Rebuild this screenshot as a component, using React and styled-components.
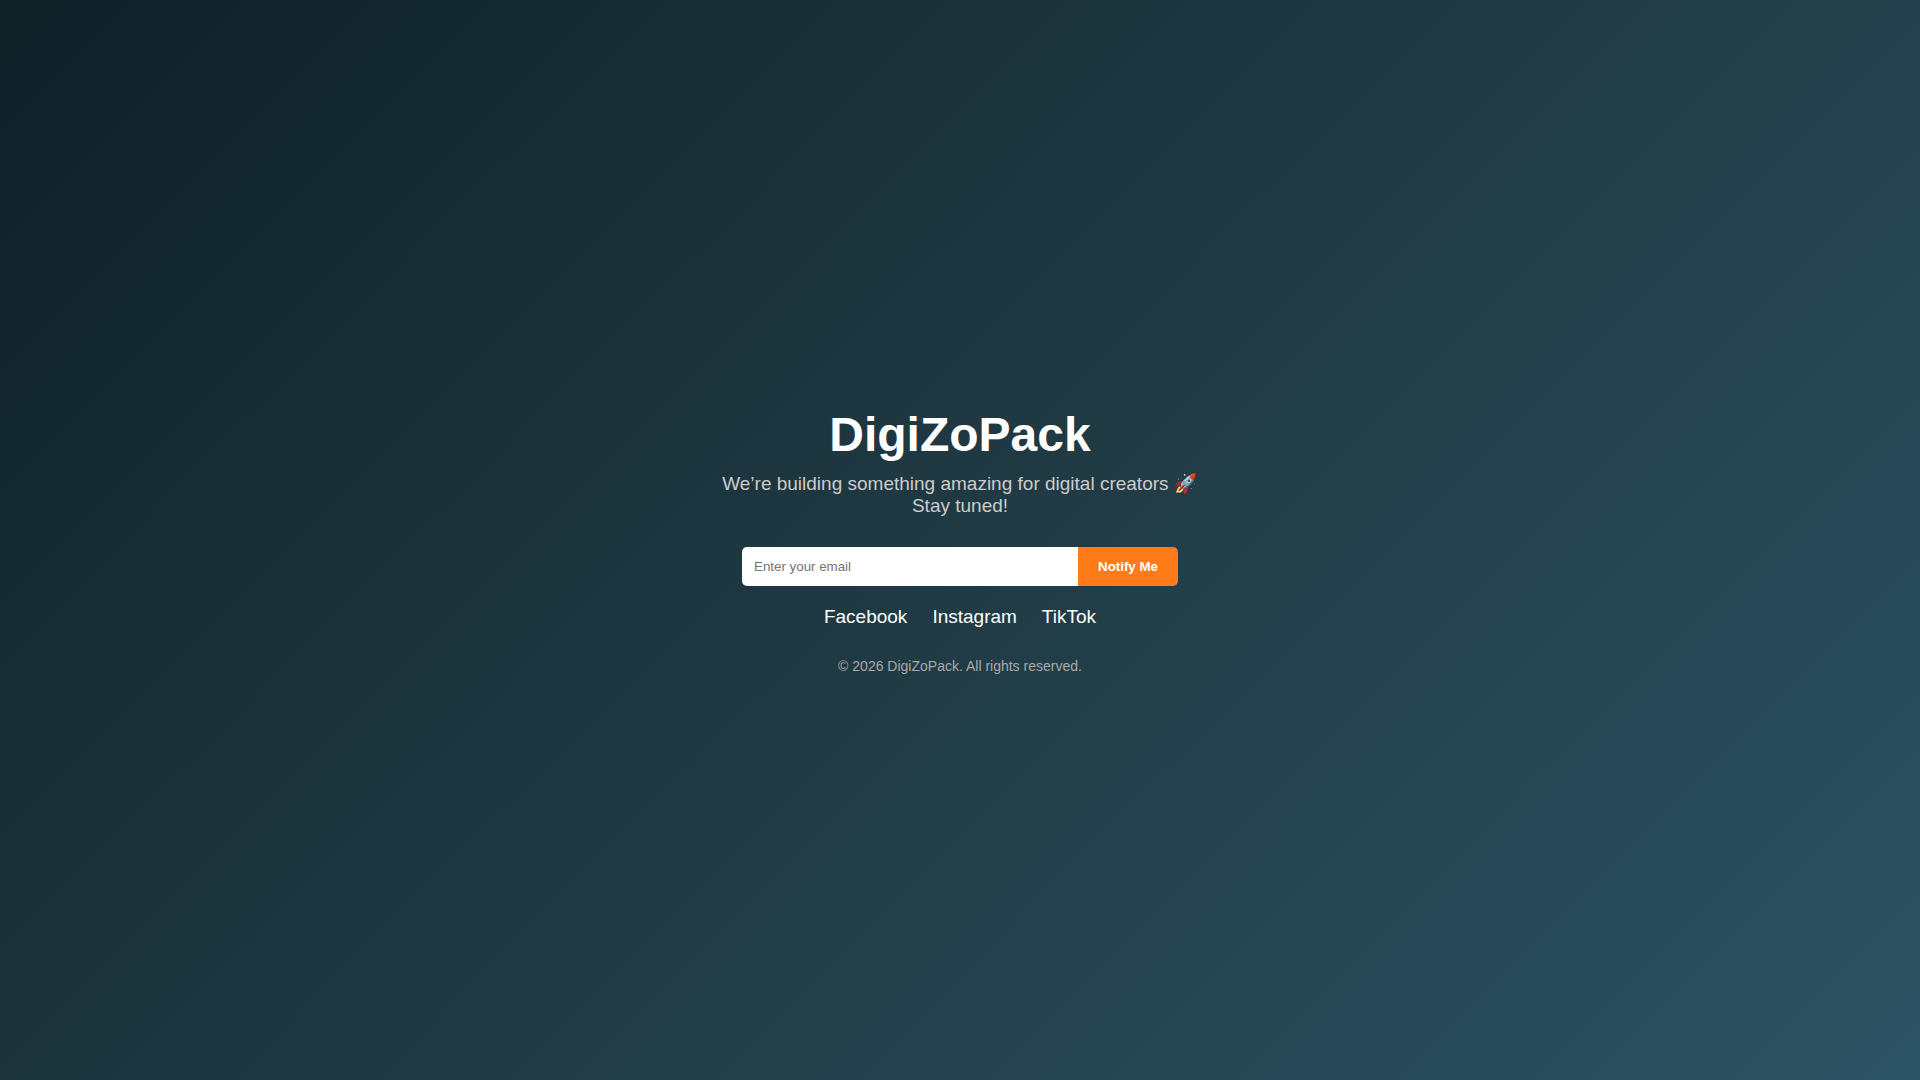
import React from "react";
import styled, { createGlobalStyle } from "styled-components";

const GlobalStyle = createGlobalStyle`
  * {
    box-sizing: border-box;
    margin: 0;
    padding: 0;
    font-family: "Liberation Sans", Arial, sans-serif;
  }
`;

const Page = styled.div`
  display: flex;
  flex-direction: column;
  align-items: center;
  justify-content: center;
  min-height: 100vh;
  padding: 20px;
  color: #fff;
  text-align: center;
  background: linear-gradient(135deg, #0f2027, #203a43, #2c5364);
`;

const Title = styled.h1`
  margin-bottom: 10px;
  font-size: 48px;
`;

const Tagline = styled.p`
  max-width: 500px;
  margin-bottom: 30px;
  font-size: 19px;
  color: #ccc;
`;

const SignupForm = styled.form`
  display: flex;
  width: 100%;
  max-width: 436px;
  margin-bottom: 20px;
`;

const EmailInput = styled.input`
  flex: 1;
  min-width: 0;
  padding: 12px;
  border: none;
  border-radius: 5px 0 0 5px;
  background: #fff;
  outline: none;
`;

const NotifyButton = styled.button`
  padding: 12px 20px;
  border: none;
  border-radius: 0 5px 5px 0;
  background: #ff7b1a;
  color: #fff;
  font-weight: bold;
  cursor: pointer;
`;

const SocialLinks = styled.nav`
  display: flex;
  gap: 25px;
`;

const SocialLink = styled.a`
  color: #fff;
  font-size: 19px;
  text-decoration: none;
`;

const Footer = styled.footer`
  margin-top: 30px;
  font-size: 14px;
  color: #aaa;
`;

const networks = ["Facebook", "Instagram", "TikTok"];

export default function App() {
  return (
    <>
      <GlobalStyle />
      <Page>
        <Title>DigiZoPack</Title>
        <Tagline>
          We’re building something amazing for digital creators 🚀
          <br />
          Stay tuned!
        </Tagline>
        <SignupForm onSubmit={(event) => event.preventDefault()}>
          <EmailInput type="email" placeholder="Enter your email" aria-label="Email" required />
          <NotifyButton type="submit">Notify Me</NotifyButton>
        </SignupForm>
        <SocialLinks>
          {networks.map((name) => (
            <SocialLink key={name} href="#">
              {name}
            </SocialLink>
          ))}
        </SocialLinks>
        <Footer>© 2026 DigiZoPack. All rights reserved.</Footer>
      </Page>
    </>
  );
}
